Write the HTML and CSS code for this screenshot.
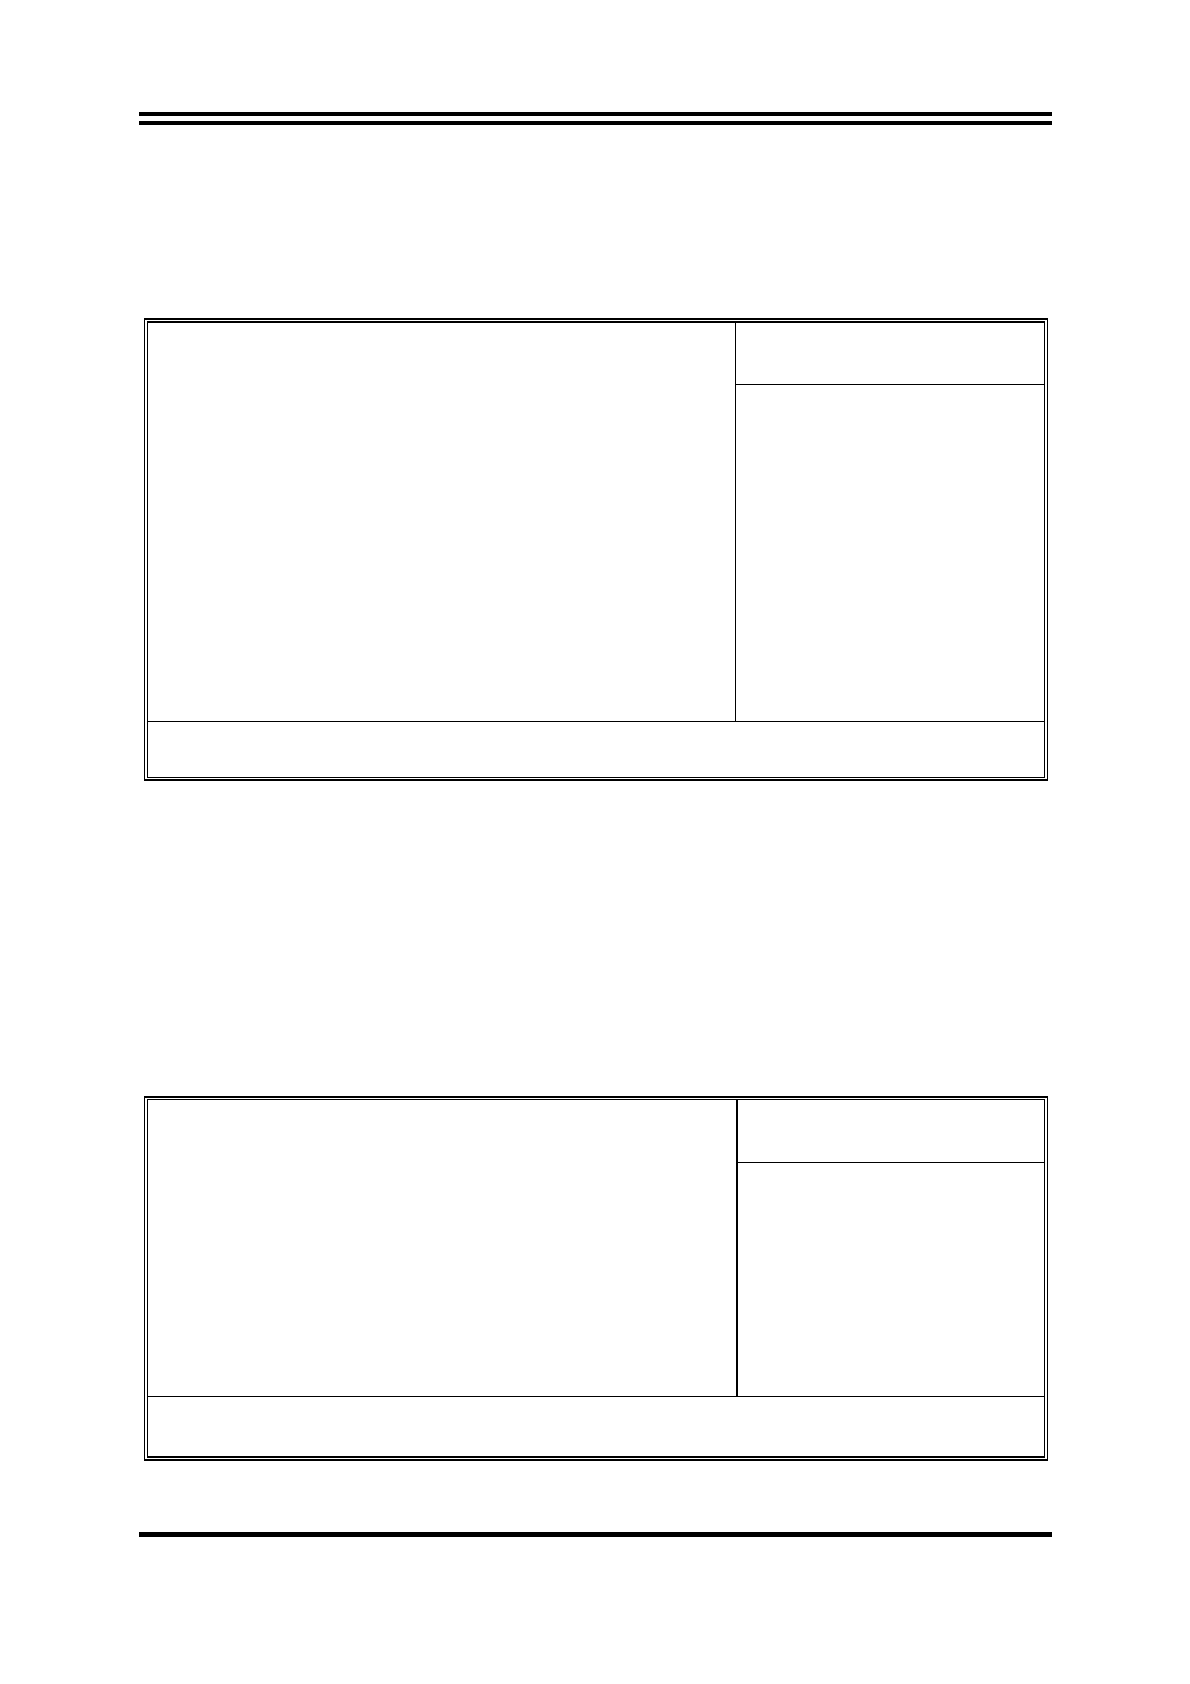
FILE: index.html
```html
<!DOCTYPE html>
<html lang="en">
<head>
<meta charset="utf-8">
<meta name="viewport" content="width=device-width, initial-scale=1">
<title>Manual page</title>
<link rel="stylesheet" href="styles.css">
</head>
<body>
<div class="page">
  <header class="page-header"></header>
  <main class="content">
    <section class="frame frame-tall">
      <div class="panel">
        <div class="panel-main"></div>
        <div class="panel-side"><div class="side-head"></div></div>
        <div class="panel-foot"></div>
      </div>
    </section>
    <section class="frame frame-short">
      <div class="panel">
        <div class="panel-main"></div>
        <div class="panel-side"><div class="side-head"></div></div>
        <div class="panel-foot"></div>
      </div>
    </section>
  </main>
  <footer class="page-footer"></footer>
</div>
</body>
</html>
```
FILE: styles.css
```css
* {
  box-sizing: border-box;
}

body {
  margin: 0;
  background: #fff;
  color: #000;
  font-family: "Liberation Sans", Arial, sans-serif;
}

.page {
  padding: 112px 138px 147px 139px;
}

/* Double rule above the text area, single rule below it */
.page-header {
  height: 13px;
  border-top: 4px solid #000;
  border-bottom: 4px solid #000;
}

.page-footer {
  border-top: 5px solid #000;
}

.content {
  display: flex;
  flex-direction: column;
  gap: 315px;
  padding: 193px 4px 71px 5px;
}

/* Outer line of each double border; the panel draws the inner line */
.frame {
  border: 1px solid #000;
  border-width: 2px 1px;
  padding: 1px 2px;
}

.panel {
  display: grid;
  border: 1px solid #000;
}

.panel-side {
  border-left: 1px solid #000;
}

.side-head {
  border-bottom: 1px solid #000;
}

.panel-foot {
  grid-column: 1 / -1;
  border-top: 1px solid #000;
}

.frame-tall .panel {
  grid-template-columns: 1fr 309px;
  grid-template-rows: minmax(398px, auto) minmax(56px, auto);
  border-top-width: 2px;
}

.frame-tall .side-head {
  min-height: 62px;
}

.frame-short .panel {
  grid-template-columns: 1fr 308px;
  grid-template-rows: minmax(296px, auto) minmax(60px, auto);
  border-bottom-width: 2px;
}

.frame-short .panel-side {
  border-left-width: 2px;
}

.frame-short .side-head {
  min-height: 63px;
}
```
